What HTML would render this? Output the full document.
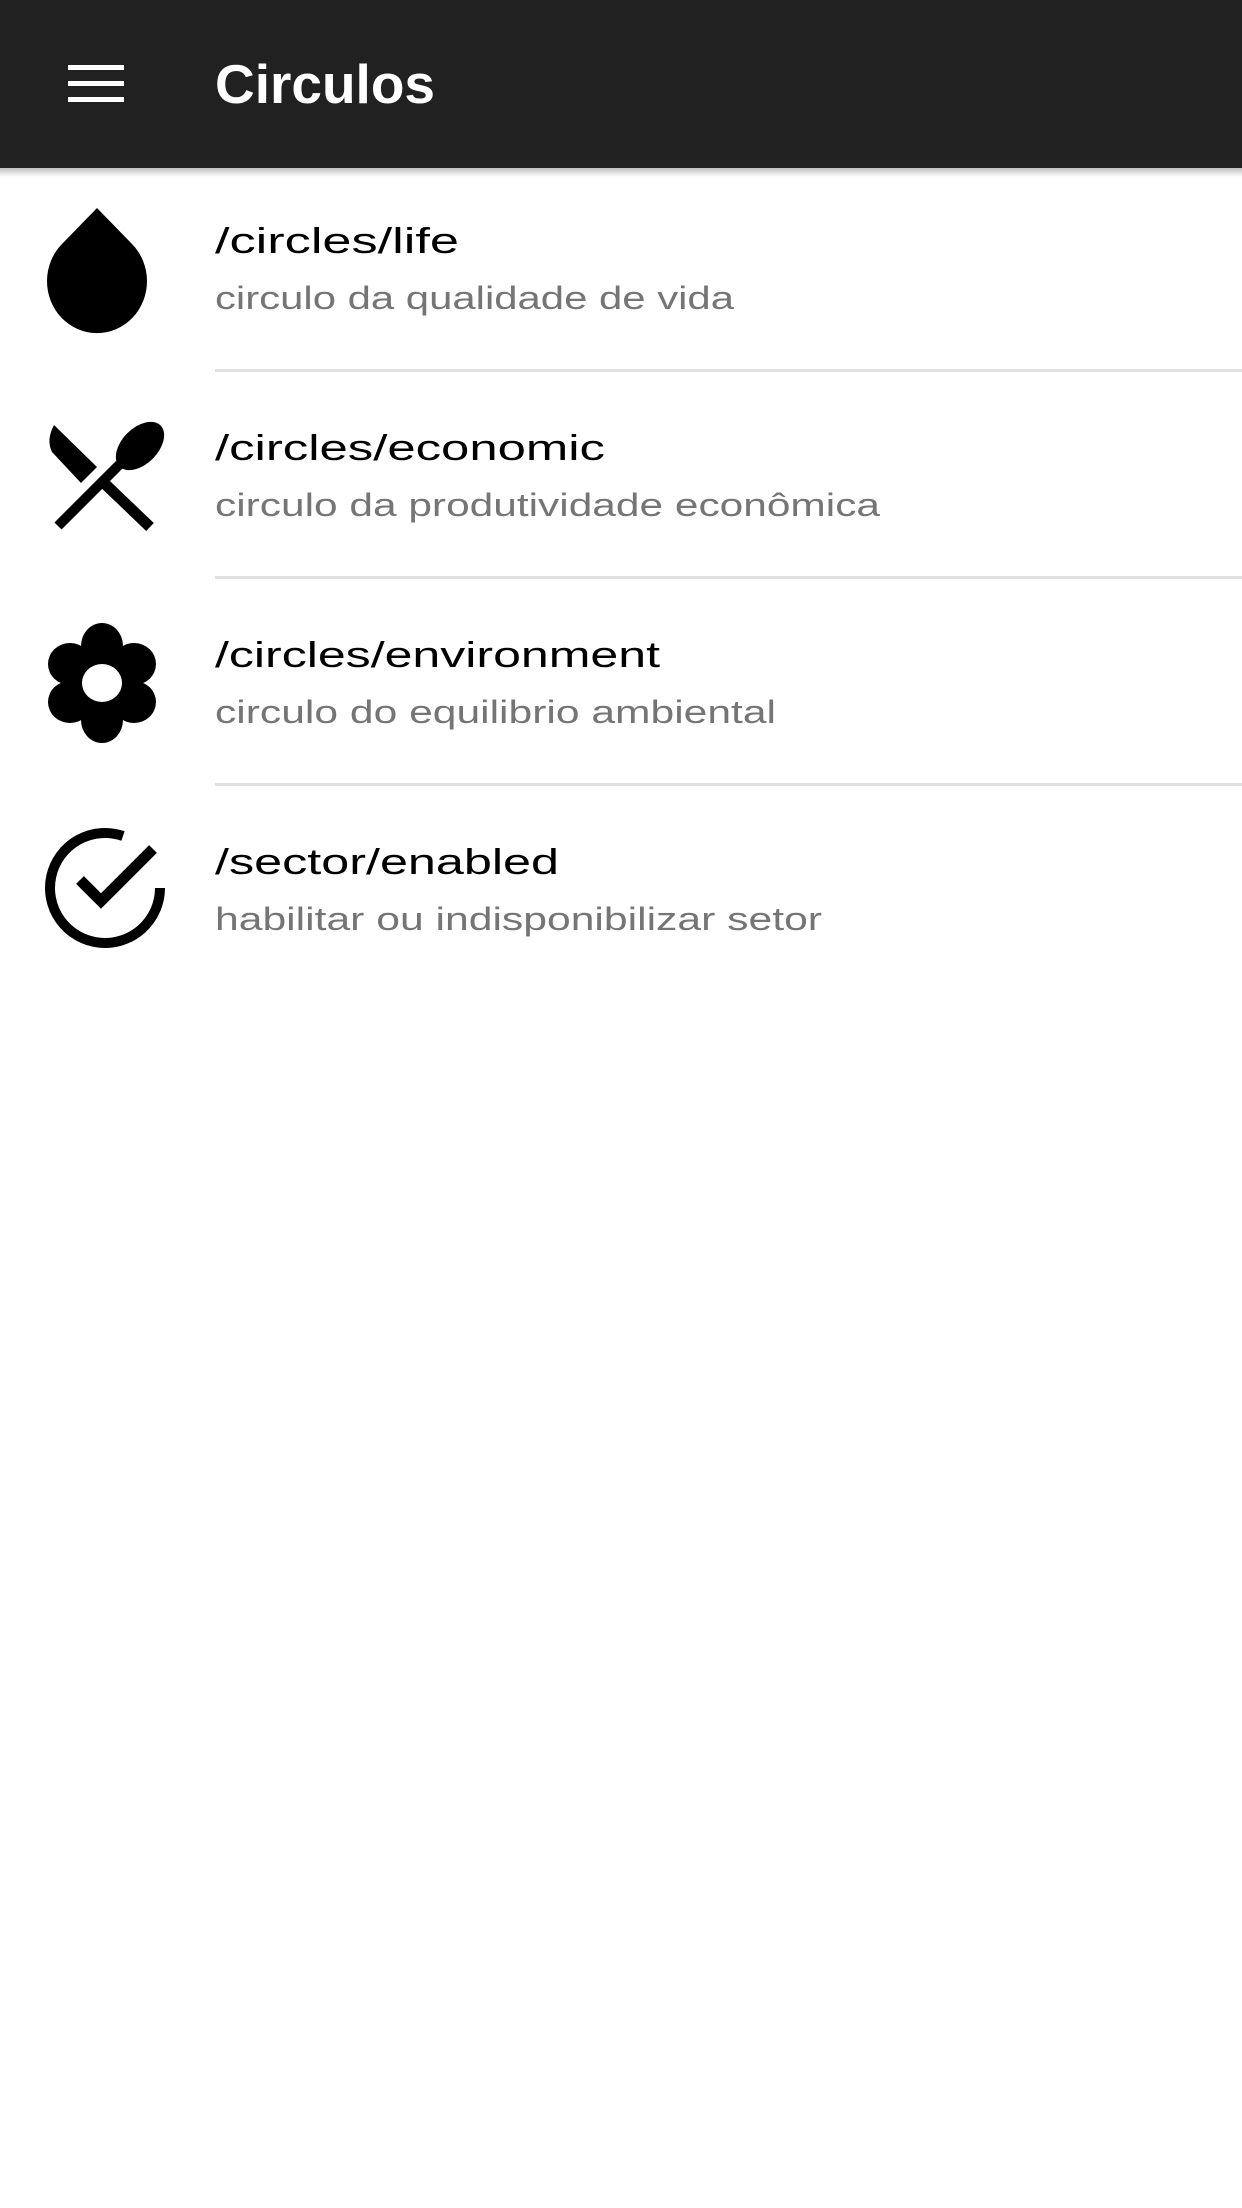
<!DOCTYPE html>
<html><head><meta charset="utf-8"><style>
html,body{margin:0;padding:0;background:#fff;width:1242px;height:2208px;overflow:hidden}
svg{display:block}
</style></head><body>
<svg width="1242" height="2208" viewBox="0 0 1242 2208" xmlns="http://www.w3.org/2000/svg">
<defs>
<linearGradient id="sh" x1="0" y1="0" x2="0" y2="1">
<stop offset="0" stop-color="#000" stop-opacity="0.25"/>
<stop offset="1" stop-color="#000" stop-opacity="0"/>
</linearGradient>
</defs>
<rect x="0" y="0" width="1242" height="168" fill="#212121"/>
<rect x="0" y="168" width="1242" height="9" fill="url(#sh)"/>
<rect x="68" y="65" width="56" height="5" fill="#fff"/>
<rect x="68" y="81" width="56" height="5" fill="#fff"/>
<rect x="68" y="97" width="56" height="5" fill="#fff"/>
<text x="215" y="103" font-family="Liberation Sans, sans-serif" font-weight="bold" font-size="55" fill="#fff" textLength="220" lengthAdjust="spacingAndGlyphs">Circulos</text>

<g font-family="Liberation Sans, sans-serif">
<text x="215" y="253" font-size="36" fill="#000" textLength="244" lengthAdjust="spacingAndGlyphs">/circles/life</text>
<text x="215" y="309" font-size="32" fill="#757575" textLength="519" lengthAdjust="spacingAndGlyphs">circulo da qualidade de vida</text>
<text x="215" y="460" font-size="36" fill="#000" textLength="390" lengthAdjust="spacingAndGlyphs">/circles/economic</text>
<text x="215" y="516" font-size="32" fill="#757575" textLength="665" lengthAdjust="spacingAndGlyphs">circulo da produtividade econômica</text>
<text x="215" y="667" font-size="36" fill="#000" textLength="445" lengthAdjust="spacingAndGlyphs">/circles/environment</text>
<text x="215" y="723" font-size="32" fill="#757575" textLength="561" lengthAdjust="spacingAndGlyphs">circulo do equilibrio ambiental</text>
<text x="215" y="874" font-size="36" fill="#000" textLength="344" lengthAdjust="spacingAndGlyphs">/sector/enabled</text>
<text x="215" y="930" font-size="32" fill="#757575" textLength="607" lengthAdjust="spacingAndGlyphs">habilitar ou indisponibilizar setor</text>
</g>

<rect x="215" y="369" width="1027" height="3" fill="#e0e0e0"/>
<rect x="215" y="576" width="1027" height="3" fill="#e0e0e0"/>
<rect x="215" y="783" width="1027" height="3" fill="#e0e0e0"/>

<!-- drop -->
<path d="M97 208 L62 244 A50 52 0 1 0 132 244 Z" fill="#000"/>

<!-- cutlery -->
<path d="M54 425 L97 467 L81 483 L52 452 Q46 440 54 425 Z" fill="#000"/>
<line x1="103" y1="482" x2="150" y2="527" stroke="#000" stroke-width="11"/>
<line x1="122" y1="462" x2="58" y2="526" stroke="#000" stroke-width="10"/>
<ellipse cx="140" cy="446" rx="29" ry="18" transform="rotate(-45 140 446)" fill="#000"/>

<!-- flower -->
<g fill="#000">
<circle cx="102" cy="683" r="36"/>
<ellipse cx="102" cy="646" rx="21" ry="23"/>
<ellipse cx="102" cy="720" rx="21" ry="23"/>
<ellipse cx="70" cy="664" rx="22" ry="21"/>
<ellipse cx="134" cy="664" rx="22" ry="21"/>
<ellipse cx="70" cy="702" rx="22" ry="21"/>
<ellipse cx="134" cy="702" rx="22" ry="21"/>
</g>
<ellipse cx="102" cy="683" rx="20" ry="19" fill="#fff"/>

<!-- check circle -->
<path d="M123 836 A55 55 0 1 0 160 888" fill="none" stroke="#000" stroke-width="10"/>
<path d="M80 880 L101 901 L153 849" fill="none" stroke="#000" stroke-width="11"/>
</svg>
</body></html>
